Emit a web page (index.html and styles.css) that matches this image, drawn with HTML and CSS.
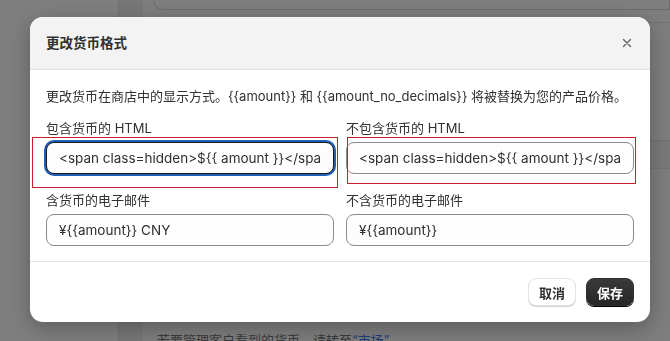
FILE: index.html
```html
<!DOCTYPE html>
<html lang="zh-CN">
<head>
	<meta charset="UTF-8">
	<title>更改货币格式</title>
	<link rel="stylesheet" href="styles.css">
</head>
<body>
	<div class="page">
		<div class="side"></div>
		<div class="rail"></div>
		<div class="main">
			<div class="card-top"></div>
			<div class="row row-a"></div>
			<div class="row row-b"></div>
			<div class="row row-c"></div>
			<p class="hint">若要管理客户看到的货币，请转至<a href="#">“市场”</a></p>
		</div>
	</div>

	<div class="modal">
		<div class="modal-hd">
			<h2>更改货币格式</h2>
			<button class="close" type="button">
				<svg width="20" height="20" viewBox="0 0 20 20"><path d="M6.5 6.5l7 7M13.5 6.5l-7 7" stroke="#616161" stroke-width="1.4" stroke-linecap="round" fill="none"/></svg>
			</button>
		</div>
		<div class="modal-bd">
			<p class="desc">更改货币在商店中的显示方式。{{amount}} 和 {{amount_no_decimals}} 将被替换为您的产品价格。</p>
			<div class="fields">
				<label class="field">
					<span>包含货币的 HTML</span>
					<input class="focus" type="text" value="<span class=hidden>${{ amount }}</span> CNY">
				</label>
				<label class="field">
					<span>不包含货币的 HTML</span>
					<input type="text" value="<span class=hidden>${{ amount }}</span>">
				</label>
				<label class="field">
					<span>含货币的电子邮件</span>
					<input type="text" value="¥{{amount}} CNY">
				</label>
				<label class="field">
					<span>不含货币的电子邮件</span>
					<input type="text" value="¥{{amount}}">
				</label>
			</div>
		</div>
		<div class="modal-ft">
			<button class="btn" type="button">取消</button>
			<button class="btn btn-dark" type="button">保存</button>
		</div>
		<div class="mark mark-1"></div>
		<div class="mark mark-2"></div>
	</div>
</body>
</html>
```
FILE: styles.css
```css
*{ margin:0; padding:0; box-sizing:border-box;}
body{ width:670px; height:341px; overflow:hidden; background:#7e7e7e; font-family:Inter, "Noto Sans CJK SC", sans-serif; font-size:13px; color:#303030;}

/* dimmed page behind the modal */
.page{ display:grid; grid-template-columns:118px 24px 1fr; height:341px;}
.side{ background:#7f7f7f;}
.rail{ background:#787878; border-left:1px solid #717171; border-right:1px solid #747474;}
.main{ display:flex; flex-direction:column; padding:0 0 0 11px;}
.card-top{ height:10px; border:1px solid #6c6c6c; border-top:0; border-radius:0 0 0 10px; background:#7f7f7f;}
.row{ border-bottom:1px solid #737373;}
.row-a{ height:13px;}
.row-b{ height:118px;}
.row-b + .row-c{ height:28px; background:#7a7a7a;}
.hint{ margin-top:161px; padding-left:4px; line-height:20px; color:#3a3a3a; font-size:13px;}
.hint a{ color:#1c3f78; text-decoration:none;}

/* modal */
.modal{ position:fixed; left:30px; top:17px; width:620px; background:#fff; border-radius:13px; box-shadow:0 6px 22px rgba(0,0,0,.28); overflow:hidden;}
.modal-hd{ display:flex; align-items:center; justify-content:space-between; height:53px; padding:0 16px; background:#f3f3f3; border-bottom:1px solid #e3e3e3;}
.modal-hd h2{ font-size:13.5px; font-weight:650; line-height:20px; color:#303030;}
.close{ display:flex; width:20px; height:20px; margin-right:-3px; border:0; background:none;}
.modal-bd{ padding:16px 16px 15px; border-bottom:1px solid #e3e3e3;}
.desc{ line-height:20px;}
.fields{ display:grid; grid-template-columns:1fr 1fr; gap:16px 12px; margin-top:12px;}
.field{ display:flex; flex-direction:column; gap:4px;}
.field span{ line-height:20px;}
.field input{ width:100%; height:32px; padding:0 12px; border:1px solid #8a8a8a; border-radius:8px; background:#fdfdfd; font:inherit; font-size:13.5px; color:#303030; outline:none;}
.field input.focus{ border-color:#1a1a1a; box-shadow:0 0 0 2px #1f5fb8;}
.modal-ft{ display:flex; justify-content:flex-end; gap:10px; padding:16px;}
.btn{ height:28px; padding:0 10px; border:1px solid #e3e3e3; border-radius:8px; background:#fff; box-shadow:0 1px 0 #d4d4d4; font:inherit; font-weight:700; color:#303030;}
.btn-dark{ border-color:#303030; background:linear-gradient(#3a3a3a,#262626); color:#fff; box-shadow:0 1px 0 #000;}

/* red annotation boxes */
.mark{ position:absolute; border:1px solid #c8202c; pointer-events:none;}
.mark-1{ left:2px; top:120px; width:306px; height:51px;}
.mark-2{ left:317px; top:120px; width:289px; height:47px;}
```
